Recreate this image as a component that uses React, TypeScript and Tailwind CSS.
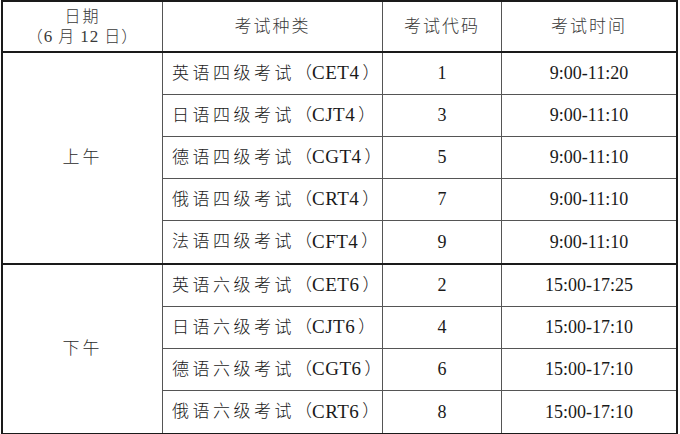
const FONT = "font-['Liberation_Serif','Noto_Sans_CJK_SC',serif]";

type Row = { name: string; abbr: string; code: string; time: string };

const morning: Row[] = [
  { name: '英语四级考试', abbr: 'CET4', code: '1', time: '9:00-11:20' },
  { name: '日语四级考试', abbr: 'CJT4', code: '3', time: '9:00-11:10' },
  { name: '德语四级考试', abbr: 'CGT4', code: '5', time: '9:00-11:10' },
  { name: '俄语四级考试', abbr: 'CRT4', code: '7', time: '9:00-11:10' },
  { name: '法语四级考试', abbr: 'CFT4', code: '9', time: '9:00-11:10' }
];

const afternoon: Row[] = [
  { name: '英语六级考试', abbr: 'CET6', code: '2', time: '15:00-17:25' },
  { name: '日语六级考试', abbr: 'CJT6', code: '4', time: '15:00-17:10' },
  { name: '德语六级考试', abbr: 'CGT6', code: '6', time: '15:00-17:10' },
  { name: '俄语六级考试', abbr: 'CRT6', code: '8', time: '15:00-17:10' }
];

function Group({ label, rows, last }: { label: string; rows: Row[]; last?: boolean }) {
  const groupLine = last ? '' : 'border-b-2 border-b-[#1a1a1a]';
  return (
    <div className={`flex ${groupLine}`}>
      <div className="w-[160px] shrink-0 flex items-center justify-center border-r border-[#555] text-[17px] tracking-[3px] text-[#2a2a2a] font-light">
        {label}
      </div>
      <div className="flex-1 flex flex-col">
        {rows.map((r, i) => (
          <div
            key={r.code}
            className={`h-[42px] flex items-center ${i < rows.length - 1 ? 'border-b border-[#555]' : ''}`}>
            <div className="w-[220px] h-full flex items-center pl-[9px] border-r border-[#555] text-[#1a1a1a] whitespace-nowrap">
              <span className="text-[17px] tracking-[3.5px] font-light">{r.name}</span>
              <span className="text-[17px] font-light">（</span>
              <span className="text-[19px] tracking-[0.5px]">{r.abbr}</span>
              <span className="text-[17px] font-light ml-[3px]">）</span>
            </div>
            <div className="w-[119px] h-full flex items-center justify-center border-r border-[#555] text-[18px] text-[#1a1a1a]">
              {r.code}
            </div>
            <div className="flex-1 h-full flex items-center justify-center text-[18px] text-[#1a1a1a]">
              {r.time}
            </div>
          </div>
        ))}
      </div>
    </div>
  );
}

export default function App() {
  return (
    <div className={`w-[680px] h-[434px] bg-white ${FONT}`}>
      <div className="ml-px w-[677px] border-2 border-[#1a1a1a]">
        <div className="h-[51px] flex border-b-2 border-b-[#1a1a1a] text-[#3a3a3a] font-light">
          <div className="w-[160px] shrink-0 flex flex-col items-center justify-center border-r border-[#555] text-[16px] leading-[20px]">
            <span className="tracking-[2px]">日期</span>
            <span className="tracking-[1px]">
              （<span className="text-[17px] font-normal">6</span> 月{' '}
              <span className="text-[17px] font-normal">12</span> 日）
            </span>
          </div>
          <div className="w-[220px] flex items-center justify-center border-r border-[#555] text-[17px] tracking-[2px]">
            考试种类
          </div>
          <div className="w-[119px] flex items-center justify-center border-r border-[#555] text-[17px] tracking-[2px]">
            考试代码
          </div>
          <div className="flex-1 flex items-center justify-center text-[17px] tracking-[2px]">
            考试时间
          </div>
        </div>
        <Group label="上午" rows={morning} />
        <Group label="下午" rows={afternoon} last />
      </div>
    </div>
  );
}
